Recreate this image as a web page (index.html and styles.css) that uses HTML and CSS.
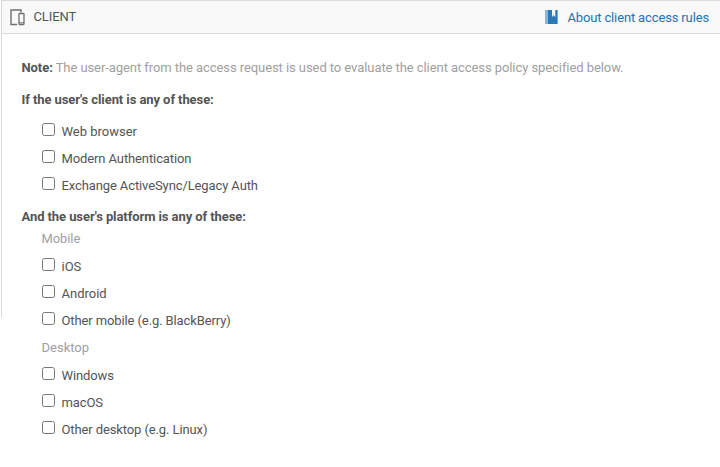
FILE: index.html
```html
<!DOCTYPE html>
<html lang="en">
<head>
<meta charset="utf-8">
<title>Client</title>
<link rel="stylesheet" href="styles.css">
</head>
<body>
<section class="panel">
  <header class="bar">
    <svg class="devices" width="16" height="17" viewBox="0 0 16 17" fill="none" stroke="#707070">
      <path d="M7 15.5H1V1H11V3.5" stroke-width="1.4"/>
      <rect x="9" y="4.5" width="5" height="11" rx=".5" stroke-width="1.3"/>
      <path d="M9 13.8H14" stroke-width="1"/>
    </svg>
    <h1 class="title">CLIENT</h1>
    <a class="help">
      <svg width="13" height="14" viewBox="0 0 13 14">
        <path fill="#86b7da" d="M0 0H3V14H0Z"/>
        <path fill="#2878ba" d="M3 0H7V7.2L8.5 5L10.3 7.2V0H13V14H3Z"/>
        <path fill="#86b7da" d="M12.2 0H13V14H12.2Z"/>
      </svg>
      <span class="link">About client access rules</span>
    </a>
  </header>
  <div class="content">
    <p class="note"><b>Note:</b> <span>The user-agent from the access request is used to evaluate the client access policy specified below.</span></p>
    <h2 class="question clients">If the user's client is any of these:</h2>
    <div class="options">
      <label class="option"><input type="checkbox"><span class="loose">Web browser</span></label>
      <label class="option"><input type="checkbox"><span>Modern Authentication</span></label>
      <label class="option"><input type="checkbox"><span>Exchange ActiveSync/Legacy Auth</span></label>
    </div>
    <h2 class="question platforms">And the user's platform is any of these:</h2>
    <h3 class="group">Mobile</h3>
    <div class="options">
      <label class="option"><input type="checkbox"><span class="loose">iOS</span></label>
      <label class="option"><input type="checkbox"><span class="loose">Android</span></label>
      <label class="option"><input type="checkbox"><span>Other mobile (e.g. BlackBerry)</span></label>
    </div>
    <h3 class="group desktop">Desktop</h3>
    <div class="options">
      <label class="option"><input type="checkbox"><span>Windows</span></label>
      <label class="option"><input type="checkbox"><span>macOS</span></label>
      <label class="option"><input type="checkbox"><span>Other desktop (e.g. Linux)</span></label>
    </div>
  </div>
</section>
</body>
</html>
```
FILE: styles.css
```css
* { box-sizing: border-box; }
body { margin: 0; min-height: 467px; background: #fff; color: #545454; font: 13px/20px "Proxima Nova", Roboto, sans-serif; }
h1, h2, h3, p { margin: 0; font-size: 13px; }
.panel { height: 318px; margin-left: 1px; border-left: 1px solid #d8d8d8; }
.bar { display: flex; align-items: center; height: 34px; padding: 0 11px 0 8px; background: #f9f9f9; border-top: 1px solid #dcdcdc; border-bottom: 1px solid #dcdcdc; }
.title { margin-left: 7.5px; font-weight: 400; letter-spacing: -0.1px; }
.help { display: flex; align-items: center; gap: 9.5px; margin-left: auto; color: #1f73b0; }
.link { padding-top: 1px; letter-spacing: -0.14px; }
.content { padding: 24px 0 0 19.5px; }
.note { color: #a0a0a0; white-space: nowrap; letter-spacing: -0.072px; }
.note b { color: #545454; }
.question { font-weight: 700; letter-spacing: -0.08px; }
.clients { margin: 12px 0 11px; }
.platforms { margin-top: 10px; }
.options { padding-left: 20.5px; }
.option { display: flex; align-items: flex-start; width: max-content; height: 27px; padding-top: 2px; line-height: 18px; letter-spacing: -0.11px; }
.option:last-child { height: 22px; }
.option input { appearance: none; width: 13px; height: 13px; margin: 0 6.5px 0 0; border: 1px solid #767676; border-radius: 2.5px; background: #fff; }
.loose { letter-spacing: 0; }
.group { margin: 2px 0 7px 20px; font-weight: 400; color: #a0a0a0; letter-spacing: -0.1px; }
.desktop { margin-top: 6px; letter-spacing: 0; }
```
